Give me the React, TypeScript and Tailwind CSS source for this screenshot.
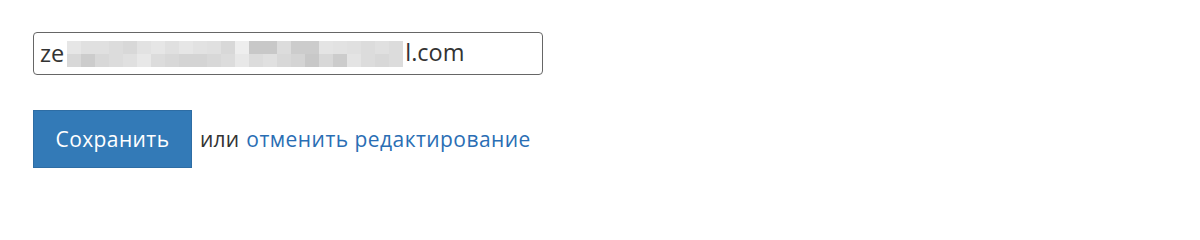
const row1 = [
  "#e6e6e6", "#e0e0e0", "#e0e0e0", "#dcdcdc", "#d8d8d8", "#e2e2e2", "#e6e6e6", "#e0e0e0",
  "#e6e6e6", "#e2e2e2", "#e0e0e0", "#d8d8d8", "#eeeeee", "#c8c8c8", "#c8c8c8", "#dcdcdc",
  "#cccccc", "#cccccc", "#e4e4e4", "#e2e2e2", "#e0e0e0", "#dcdcdc", "#e0e0e0", "#dcdcdc",
]
const row2 = [
  "#d8d8d8", "#cccccc", "#d8d8d8", "#dcdcdc", "#e0e0e0", "#e8e8e8", "#dcdcdc", "#d8d8d8",
  "#d4d4d4", "#d4d4d4", "#d8d8d8", "#dcdcdc", "#e8e8e8", "#dcdcdc", "#e0e0e0", "#d8d8d8",
  "#d4d4d4", "#c8c8c8", "#d8d8d8", "#cccccc", "#e4e4e4", "#dcdcdc", "#d8d8d8", "#dcdcdc",
]

function Mosaic() {
  return (
    <span className="ml-[3px] inline-flex flex-col" aria-hidden="true">
      {[row1, row2].map((row, r) => (
        <span key={r} className="flex">
          {row.map((c, i) => (
            <span key={i} className="block h-[13px] w-[14px]" style={{ backgroundColor: c }} />
          ))}
        </span>
      ))}
    </span>
  )
}

export default function App() {
  return (
    <div className="h-[203px] bg-white pl-[33px] pt-[32px] font-['Open_Sans',sans-serif]">
      <div className="flex h-[43px] w-[510px] items-center rounded-[4px] border border-[#666666] px-[6px] text-[23.5px] text-[#333333]">
        <span>ze</span>
        <Mosaic />
        <span className="-mt-[2px] ml-[2px]">l.com</span>
      </div>

      <div className="mt-[35px] flex items-center">
        <button
          type="button"
          className="h-[58px] w-[159px] border border-[#2e6da4] bg-[#337ab7] pt-[2px] text-[21px] tracking-[0.4px] text-white"
        >
          Сохранить
        </button>
        <span className="ml-[8px] pt-[2px] text-[21px] tracking-[0.2px] text-[#333333]">или</span>
        <a href="#" className="ml-[7px] pt-[2px] text-[21px] tracking-[0.45px] text-[#2a6eb4]">
          отменить редактирование
        </a>
      </div>
    </div>
  )
}
